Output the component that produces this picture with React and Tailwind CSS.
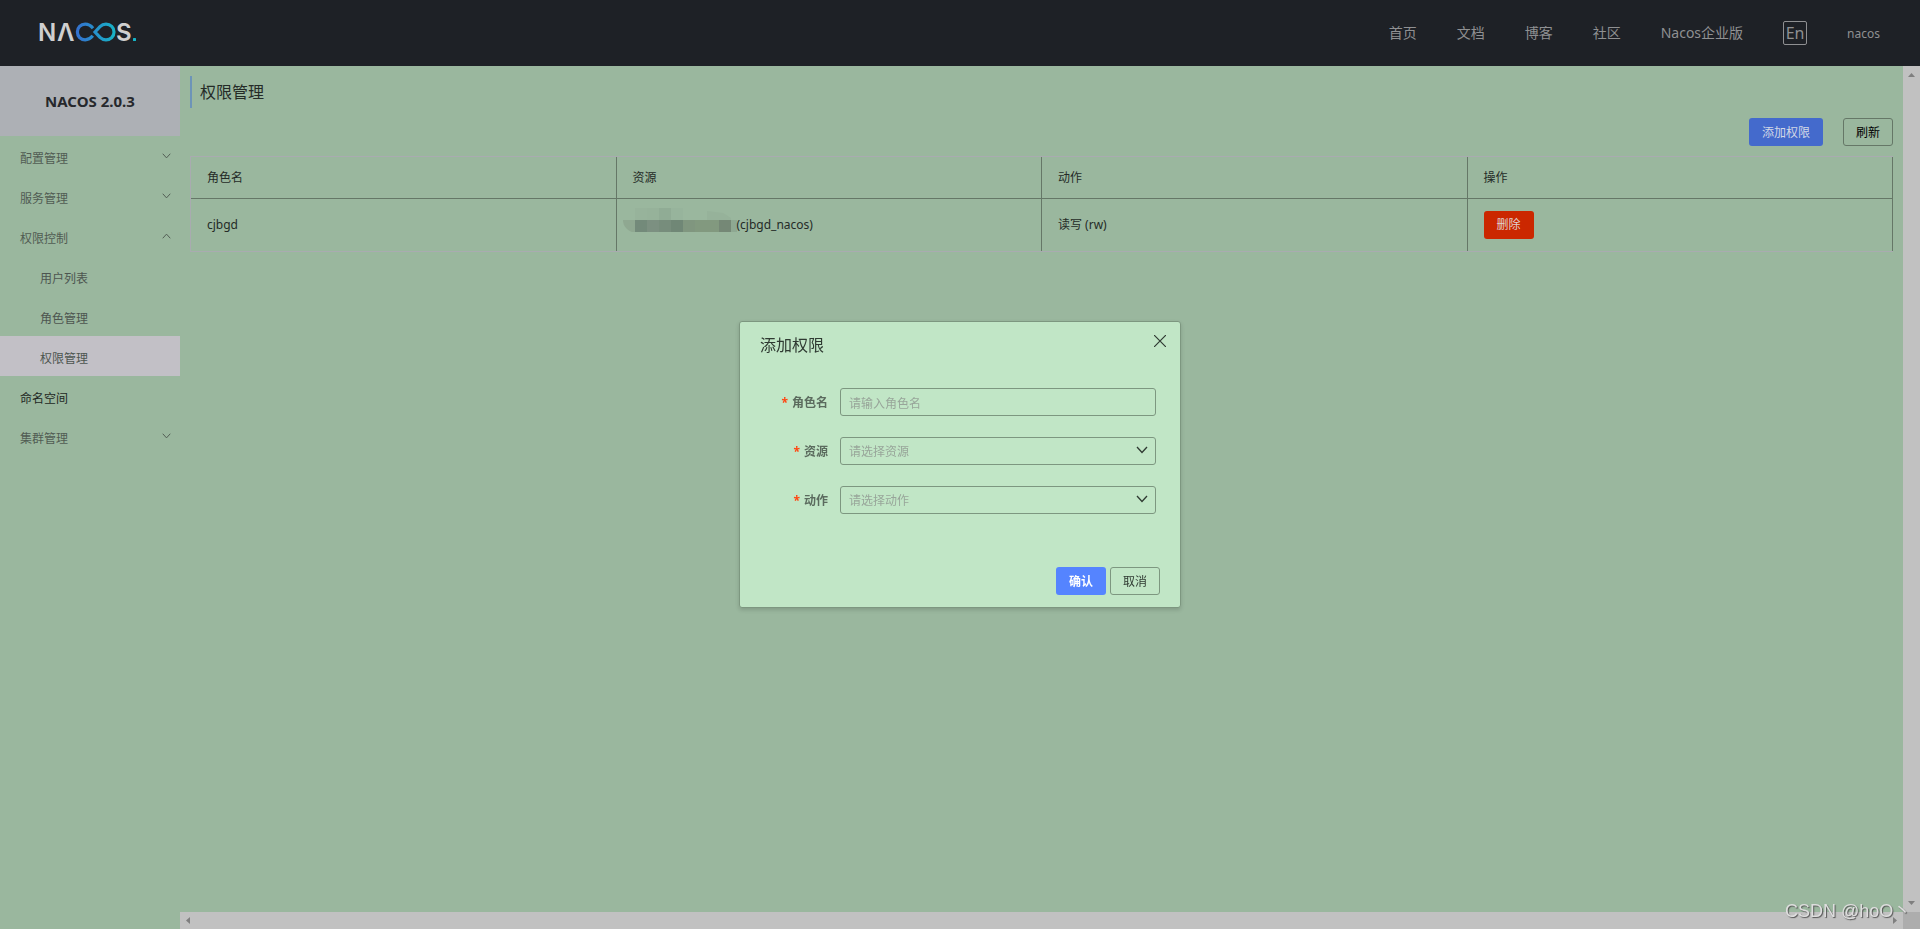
import React, { useState } from 'react'

const navLinks = ['首页', '文档', '博客', '社区', 'Nacos企业版']

const menuItems = [
  { label: '配置管理', arrow: 'down' },
  { label: '服务管理', arrow: 'down' },
  {
    label: '权限控制',
    arrow: 'up',
    children: [
      { label: '用户列表' },
      { label: '角色管理' },
      { label: '权限管理', active: true }
    ]
  },
  { label: '命名空间' },
  { label: '集群管理', arrow: 'down' }
]

const columns = ['角色名', '资源', '动作', '操作']

// hidden namespace id, one 12px block per entry
const mosaicTop = ['#97b39b', '#96b29a', '#90ac95', '#97b49c']
const mosaicBottom = ['#738a7a', '#7c9081', '#778d7c', '#708776', '#80967f', '#82997f', '#82997f', '#758876', '#7c917e']

function Logo() {
  return (
    <svg width="98" height="34" viewBox="0 -6 98 34" role="img" aria-label="NACOS." className="overflow-visible">
      <defs>
        <linearGradient id="loop" x1="36" x2="76" y1="0" y2="0" gradientUnits="userSpaceOnUse">
          <stop offset="0" stopColor="#3570cf" />
          <stop offset="1" stopColor="#16b4c6" />
        </linearGradient>
      </defs>
      <g fill="#cfcfcf" fontFamily="Inter, sans-serif" fontSize="24" fontWeight="600">
        <text x="-2" y="19">N</text>
        <text x="17" y="19">Λ</text>
        <text x="76" y="19">S</text>
      </g>
      <path
        d="M53 6.2C50.8 3.6 48.2 2.2 45.2 2.2C40.6 2.2 37.4 5.6 37.4 10C37.4 14.4 40.6 17.8 45.2 17.8C48.2 17.8 50.6 16.4 52.8 13.8"
        fill="none"
        stroke="url(#loop)"
        strokeWidth="3.2"
      />
      <path
        d="M55 10L60 4.6C61.6 3 63.8 2.2 66 2.2C70.6 2.2 74 5.6 74 10C74 14.4 70.6 17.8 66 17.8C63.8 17.8 61.6 17 60 15.4Z"
        fill="none"
        stroke="url(#loop)"
        strokeWidth="3.2"
      />
      <rect x="93" y="16" width="3" height="3" rx="0.5" fill="#16b4c6" />
    </svg>
  )
}

function Chevron({ up = false, className = '' }) {
  return (
    <svg viewBox="0 0 12 8" fill="none" stroke="currentColor" strokeWidth="1.3" className={className}>
      <path d={up ? 'M1 7L6 1.5L11 7' : 'M1 1L6 6.5L11 1'} />
    </svg>
  )
}

function Mosaic() {
  return (
    <svg width="114" height="34" viewBox="0 0 114 34" className="-ml-[10px] shrink-0" aria-hidden="true">
      {mosaicTop.map((c, i) => (
        <rect key={i} x={12 + i * 12} y="0" width="12" height="12" fill={c} />
      ))}
      <path d="M84 3L100 5L108 10V12H84Z" fill="#96b29a" />
      <path d="M0 12H12V24H9C4 22 0 18 0 12Z" fill="#8fa891" />
      {mosaicBottom.map((c, i) => (
        <rect key={i} x={12 + i * 12} y="12" width="12" height="12" fill={c} />
      ))}
      <rect x="108" y="12" width="6" height="12" fill="#8ea892" />
    </svg>
  )
}

function Header() {
  return (
    <header className="flex h-[66px] shrink-0 items-center justify-between bg-[#1e2126] px-10 text-[#8f9092]">
      <a href="#" className="block">
        <Logo />
      </a>
      <nav className="flex items-center gap-10 text-sm">
        {navLinks.map(link => (
          <a key={link} href="#">{link}</a>
        ))}
        <button type="button" className="h-6 w-6 rounded-xs border border-[#8f9092] text-base leading-5">
          En
        </button>
        <a href="#" className="pt-[2px] text-xs">nacos</a>
      </nav>
    </header>
  )
}

function MenuItem({ item }) {
  return (
    <li>
      <a
        href="#"
        className={`flex h-10 items-center justify-between pt-[6px] pr-[9px] pl-5 ${item.arrow ? 'text-[#515c53]' : 'text-[#222724]'}`}
      >
        {item.label}
        {item.arrow && <Chevron up={item.arrow === 'up'} className="mb-[6px] h-[6px] w-[9px]" />}
      </a>
      {item.children && (
        <ul>
          {item.children.map(child => (
            <li key={child.label}>
              <a
                href="#"
                className={`flex h-10 items-center pt-[6px] pl-10 text-[#4d5550] ${child.active ? 'bg-[#c2c0c6]' : ''}`}
              >
                {child.label}
              </a>
            </li>
          ))}
        </ul>
      )}
    </li>
  )
}

function Sidebar() {
  return (
    <aside className="w-[180px] shrink-0">
      <h1 className="flex h-[70px] items-center justify-center bg-[#adb0b5] text-[15px] font-bold text-[#26282c]">
        NACOS 2.0.3
      </h1>
      <ul>
        {menuItems.map(item => (
          <MenuItem key={item.label} item={item} />
        ))}
      </ul>
    </aside>
  )
}

function PermissionTable() {
  return (
    <div className="mt-[10px] border border-r-0 border-[#a9abb0]">
      <table className="w-full table-fixed border-separate border-spacing-0 text-left text-[#252b27]">
        <thead>
          <tr className="h-[42px]">
            {columns.map(col => (
              <th key={col} className="border-r border-b border-[#657767] px-4 font-normal">{col}</th>
            ))}
          </tr>
        </thead>
        <tbody>
          <tr className="h-[52px]">
            <td className="border-r border-[#657767] px-4">cjbgd</td>
            <td className="border-r border-[#657767] px-4">
              <div className="flex items-center">
                <Mosaic />
                (cjbgd_nacos)
              </div>
            </td>
            <td className="border-r border-[#657767] px-4">读写 (rw)</td>
            <td className="border-r border-[#657767] px-4">
              <button type="button" className="h-7 w-[50px] rounded-[3px] bg-[#cb2700] text-[#dfd3d0]">
                删除
              </button>
            </td>
          </tr>
        </tbody>
      </table>
    </div>
  )
}

function Field({ id, label, children }) {
  return (
    <div className="flex items-center">
      <label htmlFor={id} className="w-[68px] pt-[2px] text-right font-bold text-[#5b6b5e]">
        <span className="mr-1 text-[#ff4612]">*</span>
        {label}
      </label>
      <div className="relative ml-3 flex-1">{children}</div>
    </div>
  )
}

function SelectField({ id, label, placeholder }) {
  return (
    <Field id={id} label={label}>
      <select
        id={id}
        defaultValue=""
        className="block h-7 w-full appearance-none rounded-[3px] border border-[#7d9780] bg-transparent px-2 pt-[2px] text-[#98a59a] outline-none"
      >
        <option value="" disabled>{placeholder}</option>
      </select>
      <Chevron className="pointer-events-none absolute top-[9px] right-2 h-2 w-3 text-[#2f3a32]" />
    </Field>
  )
}

function AddDialog({ onClose }) {
  const [role, setRole] = useState('')

  return (
    <div className="fixed inset-0 flex items-center justify-center">
      <div
        role="dialog"
        aria-labelledby="dialog-title"
        className="w-[442px] rounded-[3px] border border-[#7d9780] bg-[#c1e6c6] shadow-[0_2px_4px_rgba(0,0,0,0.15)]"
      >
        <div className="flex items-start justify-between px-[14px] pt-[11px] pl-5">
          <h2 id="dialog-title" className="text-base text-[#2f3a32]">添加权限</h2>
          <button type="button" aria-label="关闭" onClick={onClose} className="mt-[2px] text-[#2f3a32]">
            <svg width="12" height="12" viewBox="0 0 12 12" fill="none" stroke="currentColor" strokeWidth="1.2">
              <path d="M0 0L12 12M12 0L0 12" />
            </svg>
          </button>
        </div>
        <form className="flex flex-col gap-[21px] pt-[31px] pr-6 pl-5">
          <Field id="role" label="角色名">
            <input
              id="role"
              type="text"
              value={role}
              onChange={e => setRole(e.target.value)}
              placeholder="请输入角色名"
              className="block h-7 w-full rounded-[3px] border border-[#7d9780] bg-transparent px-2 pt-[2px] outline-none placeholder:text-[#98a59a]"
            />
          </Field>
          <SelectField id="resource" label="资源" placeholder="请选择资源" />
          <SelectField id="action" label="动作" placeholder="请选择动作" />
        </form>
        <div className="flex justify-end gap-1 pt-[53px] pr-5 pb-3">
          <button type="button" className="h-7 w-[50px] rounded-[3px] bg-[#5584ff] pt-[2px] font-bold text-white">
            确认
          </button>
          <button
            type="button"
            onClick={onClose}
            className="h-7 w-[50px] rounded-[3px] border border-[#7d9780] pt-[2px] text-[#2f3a32]"
          >
            取消
          </button>
        </div>
      </div>
    </div>
  )
}

export default function App() {
  const [open, setOpen] = useState(true)

  return (
    <div className="flex h-screen flex-col overflow-hidden bg-[#9ab79e] font-['Noto_Sans','Noto_Sans_CJK_SC',sans-serif] text-xs">
      <Header />
      <div className="flex min-h-0 flex-1">
        <Sidebar />
        <div className="flex min-w-0 flex-1 flex-col">
          <div className="flex min-h-0 flex-1">
            <main className="min-w-0 flex-1 p-[10px]">
              <h2 className="flex h-8 items-center border-l-2 border-[#6d94b8] pl-2 text-base text-[#252b27]">
                权限管理
              </h2>
              <div className="mt-[10px] flex justify-end gap-5">
                <button
                  type="button"
                  onClick={() => setOpen(true)}
                  className="h-7 w-[74px] rounded-[3px] bg-[#446acc] pt-[2px] text-[#d2d8e6]"
                >
                  添加权限
                </button>
                <button type="button" className="h-7 w-[50px] rounded-[3px] border border-[#657767] pt-[2px] text-black">
                  刷新
                </button>
              </div>
              <PermissionTable />
            </main>
            <div className="flex w-[17px] shrink-0 flex-col items-center justify-between bg-[#c1c1c1] py-[7px] text-[#7f7f7f]">
              <svg width="7" height="4" viewBox="0 0 7 4" fill="currentColor"><path d="M0 4L3.5 0L7 4Z" /></svg>
              <svg width="7" height="4" viewBox="0 0 7 4" fill="currentColor"><path d="M0 0L3.5 4L7 0Z" /></svg>
            </div>
          </div>
          <div className="flex h-[17px] shrink-0">
            <div className="flex flex-1 items-center justify-between bg-[#c1c1c1] px-[6px] text-[#7f7f7f]">
              <svg width="4" height="7" viewBox="0 0 4 7" fill="currentColor"><path d="M4 0L0 3.5L4 7Z" /></svg>
              <svg width="4" height="7" viewBox="0 0 4 7" fill="currentColor"><path d="M0 0L4 3.5L0 7Z" /></svg>
            </div>
            <div className="w-[17px] bg-[#adadad]" />
          </div>
        </div>
      </div>
      {open && <AddDialog onClose={() => setOpen(false)} />}
      <span className="pointer-events-none fixed right-0 bottom-1 w-[135px] overflow-hidden font-['Liberation_Sans','Noto_Sans_CJK_SC',sans-serif] text-lg leading-7 whitespace-nowrap text-[#dedede] [text-shadow:1px_1px_1px_#555]">
        CSDN @hoO丶
      </span>
    </div>
  )
}
